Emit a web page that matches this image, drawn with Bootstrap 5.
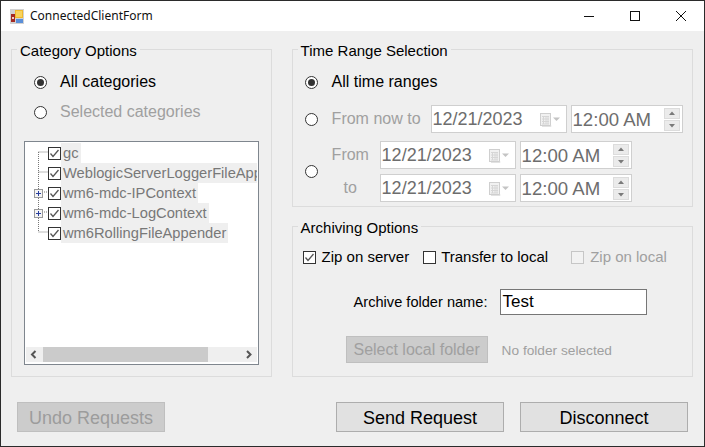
<!DOCTYPE html>
<html lang="en">
<head>
<meta charset="utf-8">
<title>ConnectedClientForm</title>
<link href="https://cdn.jsdelivr.net/npm/bootstrap@5.3.0/dist/css/bootstrap.min.css" rel="stylesheet">
<style>
html,body{margin:0;height:447px;overflow:hidden;background:#222}
body{font-family:"Liberation Sans",Arial,sans-serif;font-size:16px;line-height:18px;color:#000}
.win{width:705px;height:447px;border:1px solid #2b2b2b;background:#efefef;display:flex;flex-direction:column}
.tbar{height:30px;background:#fff;flex:none}
.tbar-ico{margin-left:9px;margin-right:6px}
.tbar-title{font-family:"Noto Sans","Open Sans",sans-serif;font-size:12px;line-height:16px;color:#111}
.wbtn{width:46px;height:30px}
.wrap{padding:10px 11px 0 10px;gap:20px}
.leftcol{width:261px}
.rightcol{width:402px;gap:11px}
.grp{border:1px solid #dcdcdc;padding:0;margin:0;min-width:0}
.grp-l{height:336px}
.grp-t{height:166px}
.grp-a{height:159px}
.grp legend{float:none;width:auto;height:17px;margin:0 0 0 5px;padding:0 3px;font-size:15px;line-height:19px}
.radio{width:13px;height:13px;border-radius:50%;border:1px solid #333;background:#fff;flex:none;display:flex;align-items:center;justify-content:center}
.radio-on::after{content:"";width:7px;height:7px;border-radius:50%;background:#333}
.dis{color:#a0a0a0}
.rw-a{margin:14px 0 0 22px;height:20px}
.rw-b{margin:10px 0 0 22px;height:20px}
.lbl{margin-left:13px}
.lbl-t{margin-left:14px}
.tree{margin:19px 0 0 12px;width:235px;height:224px;border:1px solid #7f868e;background:#fff;position:relative;padding:1px}
.tree-rows{height:204px;overflow:hidden}
.trow{height:20px;display:flex;align-items:center;color:#787878;white-space:nowrap;padding-left:22px;font-size:14.7px}
.tname{background:#efefef;height:20px;line-height:21px;padding:0 2px;flex:none}
.tlines{position:absolute;left:0;top:0}
.ck{width:13px;height:13px;flex:none;display:block}
.sbar{height:15px;background:#efefef;display:flex;align-items:center}
.sarr{width:17px;height:15px;flex:none}
.sthumb{width:165px;height:15px;background:#cbcbcb}
.sgap{flex:1}
.t-rw1{margin:14px 0 0 12px;height:20px}
.t-rw2{margin:13px 0 0 12px;height:28px}
.t-rw3{margin-left:12px;margin-top:8px}
.t-lbls{width:48px;margin-left:14px;gap:15px}
.t-two{gap:5px}
.pick{height:28px;border:1px solid #cfcfcf;background:#fff;font-size:18px;line-height:27px;color:#6d6d6d;padding-left:1px;position:relative}
.pick-d{width:136px}
.pick-d-wide{margin-left:10px}
.pick-t{width:112px;margin-left:4px;font-size:18.6px}
.picker-ico{position:absolute;right:6px;top:7px}
.spin{position:absolute;right:2px;top:2px;width:16px}
.spin svg{display:block;margin-bottom:1px}
.a-rw1{margin:13px 0 0 10px;height:18px;font-size:15px}
.a-lb{margin-left:6px}
.a-lb2{margin-left:5px}
.a-ck2{margin-left:14px}
.a-ck3{margin-left:23px}
.a-rw2{margin:23px 0 0 61px;height:26px;font-size:14.6px}
.a-inp{width:147px;height:26px;border:1px solid #767676;background:#fff;color:#000;font-size:17px;line-height:24px;padding:0 1px;margin-left:13px}
.a-rw3{margin:21px 0 0 53px;height:27px}
.btn-off{width:142px;height:27px;background:#ccc;border:1px solid #bfbfbf;color:#a0a0a0;font-size:16px;line-height:25px;text-align:center;padding:0}
.a-none{font-size:13.7px;color:#a0a0a0;margin-left:14px;padding-top:2px}
.foot{padding:25px 16px 0 16px}
.fbtn{height:30px;font-size:18px;line-height:30px;padding:0;text-align:center;border-radius:0}
.fbtn-off{width:148px;background:#ccc;border:1px solid #bfbfbf;color:#9c9c9c}
.fbtn-on{width:168px;background:#e1e1e1;border:1px solid #adadad;color:#000}
.fgap{margin-left:171px}
.fgap2{margin-left:16px}
</style>
</head>
<body>
<svg width="0" height="0" class="position-absolute">
<defs>
<symbol id="chk" viewBox="0 0 13 13"><rect x=".5" y=".5" width="12" height="12" fill="#fff" stroke="#333"/><path d="M2.500 6.500 5 9.500 10.500 3" fill="none" stroke="#555" stroke-width="1.300"/></symbol>
<symbol id="cal" viewBox="0 0 20 14"><rect x=".5" y=".5" width="10" height="12" fill="#f1f1f1" stroke="#cfcfcf"/><path d="M2 3.500h7M2 6h7M2 8.500h7M2 11h7M3.500 3v8M6 3v8M8 3v8" stroke="#d6d6d6"/><path d="M11 12.500v1H2" stroke="#e2e2e2" fill="none"/><path d="M13 4.500h7L16.500 8z" fill="#c4c4c4"/></symbol>
<symbol id="sup" viewBox="0 0 16 11"><rect x=".5" y=".5" width="15" height="10" fill="#ebebeb" stroke="#dcdcdc"/><path d="M5 7h6L8 3.500z" fill="#7a7a7a"/></symbol>
<symbol id="sdn" viewBox="0 0 16 11"><rect x=".5" y=".5" width="15" height="10" fill="#ebebeb" stroke="#dcdcdc"/><path d="M5 4h6L8 7.500z" fill="#7a7a7a"/></symbol>
</defs>
</svg>
<div class="win">
  <div class="tbar d-flex align-items-center">
    <svg class="tbar-ico" width="14" height="15" viewBox="0 0 14 15"><rect width="14" height="15" fill="#d2d2d2"/><rect x="1" y="5" width="4" height="8" fill="#a52a22"/><rect x="2" y="8" width="2" height="2" fill="#f0d0c0"/><rect x="5" y="1" width="8" height="8" fill="#f0b92c"/><rect x="6" y="2" width="6" height="6" fill="#f8d35c"/><rect x="6" y="10" width="7" height="4" fill="#5b8fd8"/></svg>
    <span class="tbar-title">ConnectedClientForm</span>
    <div class="ms-auto d-flex">
      <div class="wbtn d-flex align-items-center justify-content-center"><svg width="10" height="10"><path d="M0 5.500h10" stroke="#111"/></svg></div>
      <div class="wbtn d-flex align-items-center justify-content-center"><svg width="10" height="10"><rect x=".5" y=".5" width="9" height="9" fill="none" stroke="#111"/></svg></div>
      <div class="wbtn d-flex align-items-center justify-content-center"><svg width="10" height="10"><path d="M0 0l10 10M10 0L0 10" stroke="#111"/></svg></div>
    </div>
  </div>
  <div class="wrap d-flex">
    <div class="leftcol">
      <fieldset class="grp grp-l">
        <legend>Category Options</legend>
        <div class="d-flex align-items-center rw-a"><span class="radio radio-on"></span><span class="lbl">All categories</span></div>
        <div class="d-flex align-items-center rw-b"><span class="radio"></span><span class="lbl dis">Selected categories</span></div>
        <div class="tree">
          <svg class="tlines" width="24" height="100"><path d="M13.500 10v80M13.500 10h10M13.500 30h10M17 50h6M17 70h6M13.500 90h10" stroke="#777" stroke-dasharray="1 1" fill="none"/>
            <g><rect x="9.500" y="47.500" width="8" height="8" fill="#f4f4f4" stroke="#9a9a9a"/><path d="M11 51.500h5M13.500 49v5" stroke="#2a3f9d"/></g>
            <g><rect x="9.500" y="67.500" width="8" height="8" fill="#f4f4f4" stroke="#9a9a9a"/><path d="M11 71.500h5M13.500 69v5" stroke="#2a3f9d"/></g>
          </svg>
          <div class="tree-rows">
            <div class="trow"><svg class="ck"><use href="#chk"/></svg><span class="tname">gc</span></div>
            <div class="trow"><svg class="ck"><use href="#chk"/></svg><span class="tname">WeblogicServerLoggerFileAppender</span></div>
            <div class="trow"><svg class="ck"><use href="#chk"/></svg><span class="tname">wm6-mdc-IPContext</span></div>
            <div class="trow"><svg class="ck"><use href="#chk"/></svg><span class="tname">wm6-mdc-LogContext</span></div>
            <div class="trow"><svg class="ck"><use href="#chk"/></svg><span class="tname">wm6RollingFileAppender</span></div>
          </div>
          <div class="sbar">
            <svg class="sarr" viewBox="0 0 17 15"><path d="M9.500 4l-3.500 3.500 3.500 3.500" fill="none" stroke="#555" stroke-width="2"/></svg>
            <div class="sthumb"></div><div class="sgap"></div>
            <svg class="sarr" viewBox="0 0 17 15"><path d="M7 4l3.500 3.500L7 11" fill="none" stroke="#555" stroke-width="2"/></svg>
          </div>
        </div>
      </fieldset>
    </div>
    <div class="rightcol d-flex flex-column">
      <fieldset class="grp grp-t">
        <legend>Time Range Selection</legend>
        <div class="d-flex align-items-center t-rw1"><span class="radio radio-on"></span><span class="lbl-t">All time ranges</span></div>
        <div class="d-flex align-items-center t-rw2">
          <span class="radio"></span><span class="lbl-t dis">From now to</span>
          <div class="pick pick-d pick-d-wide"><span>12/21/2023</span><svg class="picker-ico" width="20" height="14"><use href="#cal"/></svg></div>
          <div class="pick pick-t"><span>12:00 AM</span><div class="spin"><svg width="16" height="11"><use href="#sup"/></svg><svg width="16" height="11"><use href="#sdn"/></svg></div></div>
        </div>
        <div class="d-flex align-items-center t-rw3">
          <span class="radio"></span>
          <div class="t-lbls d-flex flex-column dis"><span>From</span><span class="ms-2 ps-1">to</span></div>
          <div class="d-flex flex-column t-two">
            <div class="d-flex"><div class="pick pick-d"><span>12/21/2023</span><svg class="picker-ico" width="20" height="14"><use href="#cal"/></svg></div><div class="pick pick-t"><span>12:00 AM</span><div class="spin"><svg width="16" height="11"><use href="#sup"/></svg><svg width="16" height="11"><use href="#sdn"/></svg></div></div></div>
            <div class="d-flex"><div class="pick pick-d"><span>12/21/2023</span><svg class="picker-ico" width="20" height="14"><use href="#cal"/></svg></div><div class="pick pick-t"><span>12:00 AM</span><div class="spin"><svg width="16" height="11"><use href="#sup"/></svg><svg width="16" height="11"><use href="#sdn"/></svg></div></div></div>
          </div>
        </div>
      </fieldset>
      <fieldset class="grp grp-a">
        <legend>Archiving Options</legend>
        <div class="d-flex align-items-center a-rw1">
          <svg class="ck"><use href="#chk"/></svg><span class="a-lb">Zip on server</span>
          <svg class="ck a-ck2" width="13" height="13"><rect x=".5" y=".5" width="12" height="12" fill="#fff" stroke="#333"/></svg><span class="a-lb2">Transfer to local</span>
          <svg class="ck a-ck3" width="13" height="13"><rect x=".5" y=".5" width="12" height="12" fill="#f2f2f2" stroke="#c6c6c6"/></svg><span class="a-lb dis">Zip on local</span>
        </div>
        <div class="d-flex align-items-center a-rw2"><span>Archive folder name:</span><div class="a-inp">Test</div></div>
        <div class="d-flex align-items-center a-rw3"><button type="button" class="btn-off" disabled>Select local folder</button><span class="a-none">No folder selected</span></div>
      </fieldset>
    </div>
  </div>
  <div class="foot d-flex">
    <button type="button" class="fbtn fbtn-off" disabled>Undo Requests</button>
    <button type="button" class="fbtn fbtn-on fgap">Send Request</button>
    <button type="button" class="fbtn fbtn-on fgap2">Disconnect</button>
  </div>
</div>
</body>
</html>
